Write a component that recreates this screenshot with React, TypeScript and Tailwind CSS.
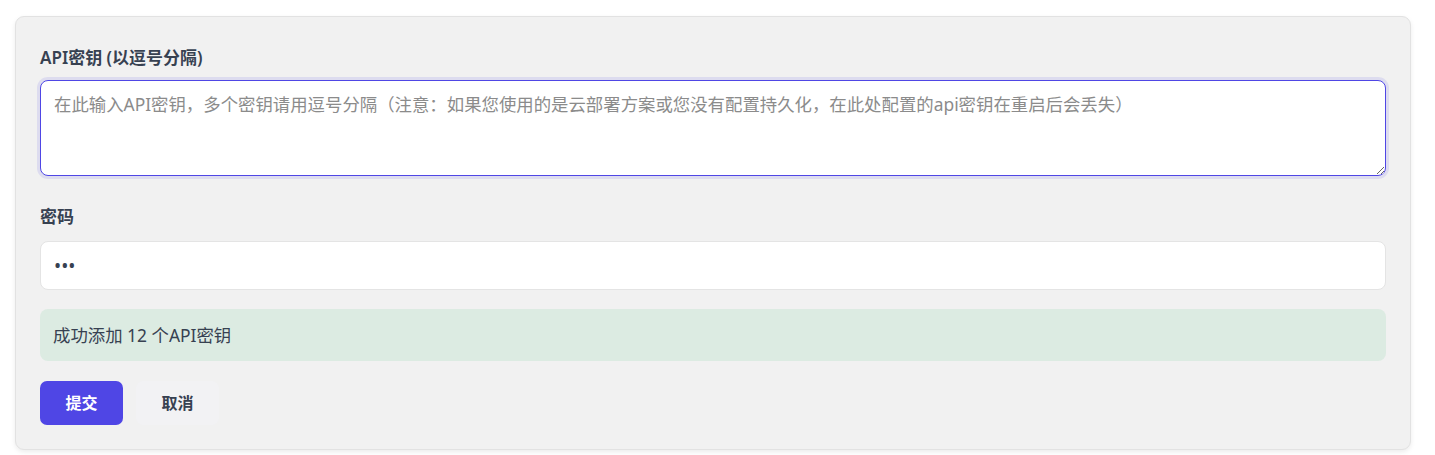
import { useState } from "react";

const font = {
  fontFamily: '"Noto Sans", "Noto Sans CJK SC", sans-serif',
};

const App = () => {
  const [keys, setKeys] = useState("");
  const [password, setPassword] = useState("abc");

  return (
    <div className="min-h-[455px] bg-white pl-[15px] pr-[24px] pt-[16px]" style={font}>
      <div className="rounded-[9px] border border-[#e2e2e2] bg-[#f1f1f1] px-[24px] pt-[30px] pb-[24px] shadow-[0_2px_5px_rgba(0,0,0,0.08)]">
        <label className="mb-[11px] block h-[22px] text-[17px] leading-[22px] font-semibold text-[#374151]">
          API密钥 (以逗号分隔)
        </label>
        <textarea
          value={keys}
          onChange={(e) => setKeys(e.target.value)}
          placeholder="在此输入API密钥，多个密钥请用逗号分隔（注意：如果您使用的是云部署方案或您没有配置持久化，在此处配置的api密钥在重启后会丢失）"
          className="block h-[96px] w-full rounded-[8px] border border-[#4f46e5] bg-white px-[13px] pt-[10px] text-[17.4px] leading-[26px] text-[#374151] shadow-[0_0_0_3px_rgba(79,70,229,0.12)] outline-none placeholder:text-[#8b8b8b]"
        />

        <label className="mt-[30px] mb-[13px] block h-[22px] text-[17px] leading-[22px] font-semibold text-[#374151]">
          密码
        </label>
        <input
          type="password"
          value={password}
          onChange={(e) => setPassword(e.target.value)}
          className="block h-[49px] w-full rounded-[8px] border border-[#e4e4e4] bg-white px-[13px] text-[19px] text-[#374151] outline-none"
        />

        <div className="mt-[19px] flex h-[52px] items-center rounded-[8px] bg-[#dcebe2] px-[13px] text-[17.4px] text-[#374151]">
          成功添加 12 个API密钥
        </div>

        <div className="mt-[20px] flex gap-[13px]">
          <button className="h-[44px] w-[83px] rounded-[7px] bg-[#4f46e5] text-[16px] font-semibold text-white">
            提交
          </button>
          <button className="h-[44px] w-[83px] rounded-[7px] bg-[#f2f2f4] text-[16px] font-semibold text-[#374151]">
            取消
          </button>
        </div>
      </div>
    </div>
  );
};

export default App;
